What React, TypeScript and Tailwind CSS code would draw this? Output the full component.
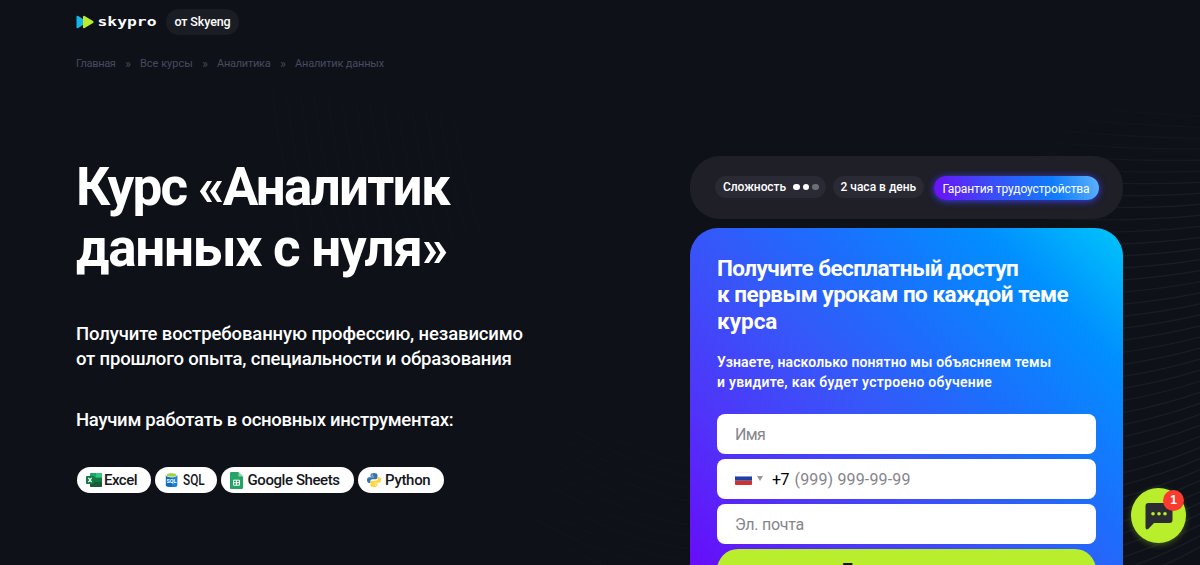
import type { ReactNode } from "react";

const crumbs = [
  { label: "Главная", className: "w-[40px] tracking-[-0.33px]" },
  { label: "Все курсы", className: "w-[53px]" },
  { label: "Аналитика", className: "w-[54px] tracking-[-0.25px]" },
  { label: "Аналитик данных", className: "w-[90px] tracking-[-0.19px]" },
];

const lines = Array.from({ length: 40 }, (_, i) => i);

function Waves() {
  return (
    <svg className="absolute inset-0 h-full w-full" viewBox="0 0 1200 565" fill="none">
      <defs>
        <linearGradient id="fadeRight" x1="1030" y1="0" x2="1150" y2="0" gradientUnits="userSpaceOnUse">
          <stop stopColor="#1a1d24" stopOpacity="0" />
          <stop offset="1" stopColor="#1a1d24" />
        </linearGradient>
      </defs>
      <g stroke="url(#fadeRight)" strokeWidth="1.2">
        {lines.map((i) => {
          const y = 110 + i * 12.2;
          const rise = -6 + i * 1.15;
          return (
            <path
              key={i}
              opacity={Math.min(1, 0.2 + i * 0.1)}
              d={`M1030 ${y - 8 + i * 0.7}Q1125 ${y + 3} 1200 ${y - rise}`}
            />
          );
        })}
      </g>
      <g stroke="#14161d" strokeWidth="1" opacity="0.8">
        {lines.slice(0, 14).map((i) => (
          <path key={i} d={`M${272 + i * 14} ${90 + i * 2}Q${282 + i * 14} 180 ${310 + i * 13} ${270 - i * 3}`} />
        ))}
        {lines.slice(0, 11).map((i) => (
          <path key={i} d={`M${530 + i * 5} ${530 - i * 11}Q${610 + i * 3} ${575 - i * 12} 690 ${585 - i * 12}`} />
        ))}
      </g>
    </svg>
  );
}

function Logo() {
  return (
    <svg className="h-[20px] w-[82px]" viewBox="0 0 82 20">
      <path d="M.5 5Q.5 3.2 2.2 4L8.5 8V12L2.2 16Q.5 16.8.5 15Z" fill="#13b5ea" />
      <path d="M7 4.8Q7 3.2 8.6 4L17 9Q18.4 10 17 11L8.6 16Q7 16.8 7 15.2Z" fill="#b9ee2c" />
      <text
        x="21.5"
        y="14"
        fontSize="13"
        fontWeight="700"
        fontFamily="DejaVu Sans Mono, monospace"
        fill="#fff"
        textLength="59"
        lengthAdjust="spacingAndGlyphs"
      >
        skypro
      </text>
    </svg>
  );
}

function ExcelIcon() {
  return (
    <svg className="h-[16px] w-[16px]" viewBox="0 0 16 16">
      <rect x="4" y="1" width="12" height="14" rx="1" fill="#21a366" />
      <path d="M4 5.5H16V10H4Z" fill="#107c41" />
      <path d="M4 10H16V14Q16 15 15 15H5Q4 15 4 14Z" fill="#185c37" />
      <path d="M10 1H15Q16 1 16 2V5.5H10Z" fill="#33c481" />
      <rect y="4" width="8" height="8" rx="1" fill="#107c41" />
      <path d="M2.4 5.8L5.6 10.2M5.6 5.8L2.4 10.2" stroke="#fff" strokeWidth="1.2" />
    </svg>
  );
}

function SqlIcon() {
  return (
    <svg className="h-[16px] w-[13px]" viewBox="0 0 13 16">
      <path d="M.8 3V13.5C.8 15.6 12.2 15.6 12.2 13.5V3Z" fill="#0f6cbd" />
      <path d="M7 3H12.2V13.5C12.2 14.6 10 15.1 7 15.1Z" fill="#1b84d4" />
      <ellipse cx="6.5" cy="3.1" rx="5.7" ry="2.3" fill="#e3eef5" />
      <ellipse cx="6.5" cy="2.9" rx="4.6" ry="1.6" fill="#a4d233" />
      <text x="6.5" y="11" textAnchor="middle" fontSize="5.4" fontWeight="700" fontFamily="Roboto, sans-serif" fill="#fff">
        SQL
      </text>
    </svg>
  );
}

function SheetsIcon() {
  return (
    <svg className="h-[17px] w-[13px]" viewBox="0 0 13 17">
      <path d="M1.2 0H8.5L13 4.5V15.8Q13 17 11.8 17H1.2Q0 17 0 15.8V1.2Q0 0 1.2 0Z" fill="#23a566" />
      <path d="M8.5 0L13 4.5H8.5Z" fill="#8ed1b1" />
      <path d="M3.5 8.2H9.5V13.2H3.5ZM3.5 10.7H9.5M6.5 8.2V13.2" stroke="#fff" strokeWidth="1" fill="none" />
    </svg>
  );
}

function PythonIcon() {
  return (
    <svg className="h-[14px] w-[14px]" viewBox="0 0 24 24">
      <path
        d="M12 0C8 0 6 1.2 6 3.6V6.3H12.2V7.3H3.6C1.2 7.3 0 9.6 0 12.2S1.2 17.3 3.6 17.3H5.8V14.3C5.8 12.4 7.3 10.9 9.2 10.9H15C16.6 10.9 18 9.6 18 7.9V3.6C18 1.2 15.8 0 12 0Z"
        fill="#3776ab"
      />
      <path
        d="M12 24C16 24 18 22.8 18 20.4V17.7H11.8V16.7H20.4C22.8 16.7 24 14.4 24 11.8S22.8 6.7 20.4 6.7H18.2V9.7C18.2 11.6 16.7 13.1 14.8 13.1H9C7.4 13.1 6 14.4 6 16.1V20.4C6 22.8 8.2 24 12 24Z"
        fill="#ffd43b"
      />
      <circle cx="8.9" cy="3.5" r="1.1" fill="#fff" />
      <circle cx="15.1" cy="20.5" r="1.1" fill="#fff" />
    </svg>
  );
}

function Tool({ icon, className, children }: { icon: ReactNode; className: string; children: ReactNode }) {
  return (
    <li className={`flex h-[26px] items-center whitespace-nowrap rounded-full bg-white text-[15px] font-medium text-[#16171c] ${className}`}>
      {icon}
      {children}
    </li>
  );
}

function Flag() {
  return (
    <svg className="h-[13px] w-[17px]" viewBox="0 0 17 13">
      <rect width="17" height="13" rx="1" fill="#e4e4e6" />
      <rect x=".5" y=".5" width="16" height="4" fill="#fff" />
      <rect y="4.5" width="17" height="4.2" fill="#1c3fa8" />
      <path d="M0 8.7H17V12Q17 13 16 13H1Q0 13 0 12Z" fill="#d0322c" />
    </svg>
  );
}

export default function App() {
  return (
    <div className="relative h-[565px] w-[1200px] overflow-hidden bg-[#0e1118] font-['Roboto',sans-serif] text-white">
      <Waves />

      <div className="relative px-[76px] pt-[9px]">
        {/* Header */}
        <header className="flex h-[25.5px] items-center">
          <Logo />
          <span className="ml-[8px] flex h-[25.5px] w-[73px] items-center justify-center rounded-full bg-[#1b1d25] pt-px text-[12.5px] font-medium tracking-[-0.1px]">
            от Skyeng
          </span>
        </header>

        {/* Breadcrumbs */}
        <nav className="mt-[21.5px] flex h-4 items-center whitespace-nowrap text-[11px] leading-4 text-[#474a60]">
          {crumbs.map((item, i) => (
            <span key={item.label} className="flex">
              {i > 0 && <span className="w-[24px] text-center text-[12px]">»</span>}
              <span className={item.className}>{item.label}</span>
            </span>
          ))}
        </nav>

        <main className="mt-[84px] flex justify-between">
          {/* Course info */}
          <section className="whitespace-nowrap pt-px">
            <h1 className="text-[53px] font-bold leading-[60.5px]">
              <span className="block tracking-[-1.72px]">Курс «Аналитик</span>
              <span className="block tracking-[-1.25px]">данных с нуля»</span>
            </h1>
            <p className="mt-[44px] text-[18.5px] font-medium leading-[24.5px]">
              <span className="block tracking-[-0.12px]">Получите востребованную профессию, независимо</span>
              <span className="block tracking-[-0.18px]">от прошлого опыта, специальности и образования</span>
            </p>
            <p className="mt-[37px] text-[18.5px] font-medium leading-6 tracking-[-0.27px]">
              Научим работать в основных инструментах:
            </p>
            <ul className="mt-[35px] flex gap-[4px] pl-[0.5px]">
              <Tool icon={<ExcelIcon />} className="w-[74.5px] gap-[2.5px] pl-[9px] tracking-[-0.5px]">
                Excel
              </Tool>
              <Tool icon={<SqlIcon />} className="w-[61.5px] gap-[5px] pl-[9.5px]">
                <span className="origin-left scale-x-[0.79]">SQL</span>
              </Tool>
              <Tool icon={<SheetsIcon />} className="w-[133.5px] gap-[5px] pl-[9px] tracking-[-0.42px]">
                Google Sheets
              </Tool>
              <Tool icon={<PythonIcon />} className="w-[86px] gap-[4.5px] pl-[8.5px] tracking-[-0.3px]">
                Python
              </Tool>
            </ul>
          </section>

          {/* Lead form */}
          <section className="mr-px w-[433px] whitespace-nowrap">
            <div className="flex h-[63px] items-start rounded-[30px] bg-[#1e1f27] pl-[25px] pt-[20px] text-[12px] font-medium">
              <div className="flex h-[22px] w-[110.5px] items-center rounded-full bg-[#292a33] pl-2">
                <span className="tracking-[-0.08px]">Сложность</span>
                <span className="ml-[7.5px] flex gap-[3px]">
                  <i className="size-[6.5px] rounded-full bg-white" />
                  <i className="size-[6.5px] rounded-full bg-white" />
                  <i className="size-[6.5px] rounded-full bg-[#6d6e75]" />
                </span>
              </div>
              <div className="ml-[7px] flex h-[22px] w-[91.5px] items-center rounded-full bg-[#292a33] pl-2">2 часа в день</div>
              <div className="ml-[9.5px] flex h-[24px] w-[165px] items-center justify-center rounded-full bg-[linear-gradient(75deg,#6a12f8_2%,#3f48f8_32%,#0e7dfd_72%,#5eb3fb_100%)] pt-px font-normal tracking-[-0.12px] shadow-[0_1px_7px_#3c3cf8]">
                Гарантия трудоустройства
              </div>
            </div>

            <form className="mt-[9px] h-[433px] rounded-[28px] bg-[linear-gradient(45deg,#6a06f9_8%,#5034f9_30%,#3657f9_50%,#1f6bfc_63%,#018fff_84%,#00c6fa_100%)] px-[27px] pt-[27px]">
              <h2 className="text-[22.5px] font-bold leading-[26.4px]">
                <span className="block tracking-[-0.56px]">Получите бесплатный доступ</span>
                <span className="block tracking-[-0.5px]">к первым урокам по каждой теме</span>
                <span className="block">курса</span>
              </h2>
              <p className="mt-[18px] text-[14px] font-semibold leading-5">
                <span className="block tracking-[0.11px]">Узнаете, насколько понятно мы объясняем темы</span>
                <span className="block tracking-[0.26px]">и увидите, как будет устроено обучение</span>
              </p>
              <div className="mt-[21.5px] flex flex-col gap-[4.5px] text-[16px] text-[#85858a]">
                <label className="flex h-[40.5px] items-center rounded-lg bg-white pl-[18px] pt-[2px] tracking-[-0.6px]">Имя</label>
                <label className="flex h-[40.5px] items-center rounded-lg bg-white pl-[18px]">
                  <Flag />
                  <i className="ml-[5px] border-x-[3.5px] border-t-[5px] border-x-transparent border-t-[#98989c]" />
                  <span className="ml-[9px] w-[22.5px] pt-[2px] tracking-[-0.5px] text-black">+7</span>
                  <span className="pt-[2px] tracking-[0.15px]">(999) 999-99-99</span>
                </label>
                <label className="flex h-[40.5px] items-center rounded-lg bg-white pl-[18px] pt-[2px] tracking-[-0.27px]">
                  Эл. почта
                </label>
                <button
                  type="button"
                  className="flex h-[42px] items-center justify-center rounded-[21px] bg-[#b9ee2c] text-[16px] font-bold text-[#16171c]"
                >
                  Получить доступ
                </button>
              </div>
            </form>
          </section>
        </main>
      </div>

      {/* Chat button */}
      <div className="absolute left-[1131px] top-[488px] flex size-[55px] items-center justify-center rounded-full bg-[#b9ee2c] shadow-[0_2px_6px_rgba(185,238,44,0.3)]">
        <svg className="h-[28px] w-[28px]" viewBox="0 0 28 28">
          <path d="M3.5 1H24.5Q27.5 1 27.5 4V18Q27.5 21 24.5 21H9L3.2 27Q.5 28.5.5 25V4Q.5 1 3.5 1Z" fill="#2b2c31" />
          <circle cx="8" cy="11.7" r="1.8" fill="#b9ee2c" />
          <circle cx="14" cy="11.7" r="1.8" fill="#b9ee2c" />
          <circle cx="20" cy="11.7" r="1.8" fill="#b9ee2c" />
        </svg>
        <span className="absolute left-[32px] top-[1.5px] flex size-[21px] items-center justify-center rounded-full bg-[#fb3b2f] font-['Liberation_Sans',sans-serif] text-[12px] font-bold">
          1
        </span>
      </div>
    </div>
  );
}
